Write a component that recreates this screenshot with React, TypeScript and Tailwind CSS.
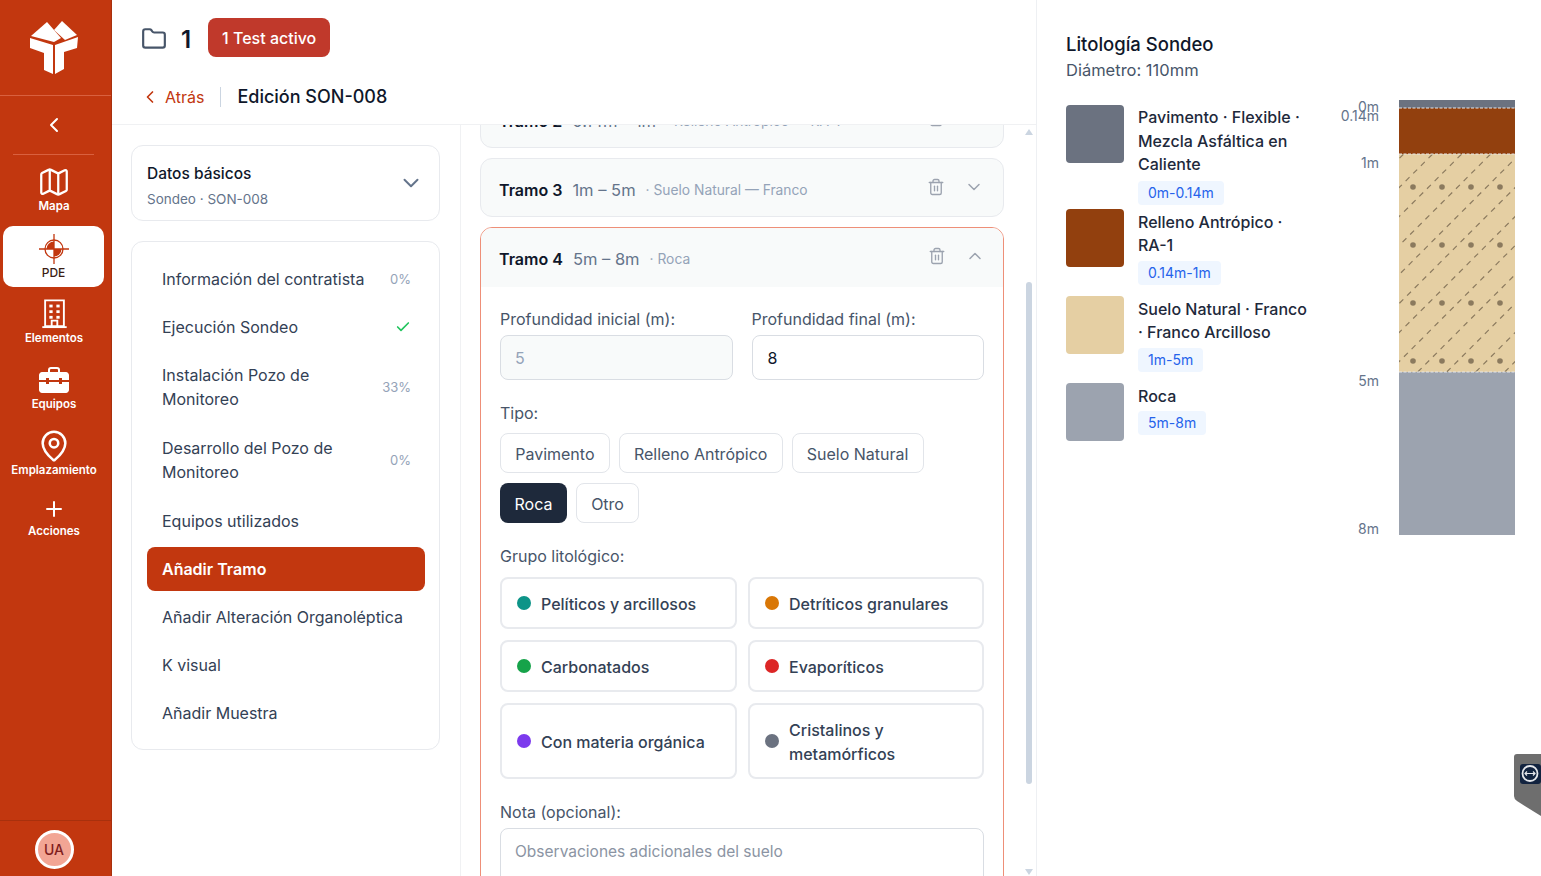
import { Check, ChevronDown, ChevronLeft, ChevronUp, Folder, Map, MapPin, Plus, Trash2 } from "lucide-react";
import type { ReactNode } from "react";

const FONT = "font-['Inter','Noto_Sans',sans-serif]";

function Logo() {
  return (
    <svg width="50" height="54" viewBox="0 0 50 54" fill="white">
      <path d="M1 15 L17 1 L31 17 L24 21 Z" />
      <path d="M24 9 L32 0 L47 14 L35 19 Z" />
      <path d="M0 17 L23 24 L23 53 L14 49 L14 32 L0 27 Z" />
      <path d="M48 16 L25 24 L25 53 L34 48 L34 31 L47 27 Z" />
    </svg>
  );
}

function PdeIcon() {
  return (
    <svg width="32" height="32" viewBox="0 0 32 32">
      <circle cx="16" cy="16" r="9" fill="none" stroke="#c2370f" strokeWidth="1.3" />
      <path d="M16 16 V8.500 A7.500 7.500 0 0 0 8.500 16 Z" fill="#c2370f" />
      <path d="M16 16 V23.500 A7.500 7.500 0 0 0 23.500 16 Z" fill="#c2370f" />
      <path d="M16 1 V31 M1 16 H31" stroke="#c2370f" strokeWidth="1.3" />
    </svg>
  );
}

function BuildingIcon() {
  return (
    <svg width="25" height="30" viewBox="0 0 26 32" fill="none" stroke="white" strokeWidth="2">
      <path d="M3 1.500 H23 V29 H3 Z" />
      <path d="M0 30 H26" />
      <path d="M10 29 V23 H16 V29" />
      <g fill="white" stroke="none">
        <rect x="7.500" y="6" width="3.500" height="3" />
        <rect x="15" y="6" width="3.500" height="3" />
        <rect x="7.500" y="12" width="3.500" height="3" />
        <rect x="15" y="12" width="3.500" height="3" />
        <rect x="7.500" y="18" width="3.500" height="3" />
        <rect x="15" y="18" width="3.500" height="3" />
      </g>
    </svg>
  );
}

function ToolboxIcon() {
  return (
    <svg width="30" height="26" viewBox="0 0 30 26" fill="white">
      <path d="M10 5 V3 C10 1.500 11 1 12 1 H18 C19 1 20 1.500 20 3 V5" fill="none" stroke="white" strokeWidth="2" />
      <path d="M3 5 H27 C28.500 5 30 6.500 30 8 V13 H23 V11 H20 V13 H10 V11 H7 V13 H0 V8 C0 6.500 1.500 5 3 5 Z" />
      <path d="M0 15 H7 V17 H10 V15 H20 V17 H23 V15 H30 V23 C30 24.500 28.500 26 27 26 H3 C1.500 26 0 24.500 0 23 Z" />
    </svg>
  );
}

function NavItem({ icon, label }: { icon: ReactNode; label: string }) {
  return (
    <div className="flex h-[66px] flex-col items-center justify-center pr-[3px] text-white">
      <div className="flex h-[34px] items-center justify-center">{icon}</div>
      <span className="text-[11.5px] font-semibold leading-[14px]">{label}</span>
    </div>
  );
}

function Sidebar() {
  return (
    <aside className="flex h-full w-[112px] shrink-0 flex-col border-r border-[#a8300d] bg-[#c2370f]">
      <div className="flex h-[96px] items-center justify-center border-b border-[#d9603f] pr-px">
        <Logo />
      </div>
      <div className="ml-[13px] flex h-[59px] w-[81px] items-center justify-center border-b border-[#d9603f]">
        <ChevronLeft className="h-6 w-6 text-white" strokeWidth={2} />
      </div>
      <div className="flex flex-1 flex-col pt-px">
        <NavItem icon={<Map className="h-[34px] w-[34px]" strokeWidth={1.6} />} label="Mapa" />
        <div className="ml-[3px] mb-px mt-[4px] flex h-[61px] w-[101px] flex-col items-center justify-center rounded-[10px] bg-white text-[#3b1d14]">
          <PdeIcon />
          <span className="text-xs font-medium leading-4">PDE</span>
        </div>
        <NavItem icon={<BuildingIcon />} label="Elementos" />
        <NavItem icon={<ToolboxIcon />} label="Equipos" />
        <NavItem icon={<MapPin className="h-[34px] w-[34px]" strokeWidth={1.8} />} label="Emplazamiento" />
        <div className="-mt-[5px]">
          <NavItem icon={<Plus className="h-6 w-6 translate-y-[2px]" strokeWidth={2} />} label="Acciones" />
        </div>
      </div>
      <div className="flex h-[56px] items-center justify-center border-t border-[#a8300d] pr-[3px] pt-[2px]">
        <div className="flex h-[39px] w-[39px] items-center justify-center rounded-full border-[3px] border-white bg-[#f2a594] text-sm font-medium text-[#7f1d1d]">
          UA
        </div>
      </div>
    </aside>
  );
}

function Header() {
  return (
    <header className="h-[125px] shrink-0 border-b border-[#f0f1f3] bg-white">
      <div className="flex h-[75px] items-center pl-[29px]">
        <Folder className="h-[26px] w-[26px] translate-y-px text-[#475569]" strokeWidth={2} />
        <span className="ml-[14px] translate-y-[1.5px] text-2xl font-semibold text-[#0f172a]">1</span>
        <span className="ml-[17px] flex h-[39px] w-[122px] items-center justify-center rounded-lg bg-[#c0392b] text-base font-medium text-white">
          1 Test activo
        </span>
      </div>
      <div className="flex h-[44px] items-center pl-[28px]">
        <ChevronLeft className="h-5 w-5 text-[#c2370f]" strokeWidth={2} />
        <span className="ml-[5px] text-base text-[#c2370f]">Atrás</span>
        <span className="ml-[16px] h-[20px] w-px bg-[#cbd5e1]" />
        <span className="ml-[16px] text-lg font-medium text-[#0f172a]">Edición SON-008</span>
      </div>
    </header>
  );
}

const steps: { label: string; pct?: string; done?: boolean; active?: boolean; tall?: boolean }[] = [
  { label: "Información del contratista", pct: "0%" },
  { label: "Ejecución Sondeo", done: true },
  { label: "Instalación Pozo de Monitoreo", pct: "33%", tall: true },
  { label: "Desarrollo del Pozo de Monitoreo", pct: "0%", tall: true },
  { label: "Equipos utilizados" },
  { label: "Añadir Tramo", active: true },
  { label: "Añadir Alteración Organoléptica" },
  { label: "K visual" },
  { label: "Añadir Muestra" },
];

function StepsPanel() {
  return (
    <div className="flex h-full w-[349px] shrink-0 flex-col border-r border-[#f0f1f3] pl-[19px] pt-[20px]">
      <div className="flex h-[76px] w-[309px] items-center justify-between rounded-xl border border-[#e8eaee] pl-[15px] pr-[15px] pt-[5px]">
        <div>
          <div className="text-[15.5px] font-medium leading-[24px] text-[#0f172a]">Datos básicos</div>
          <div className="mt-[3px] text-[13.5px] leading-[20px] text-[#64748b]">Sondeo · SON-008</div>
        </div>
        <ChevronDown className="mb-[5px] h-[26px] w-[26px] text-[#64748b]" strokeWidth={1.8} />
      </div>
      <div className="mt-[20px] flex w-[309px] flex-col rounded-xl border border-[#e8eaee] pb-[12px] pl-[15px] pr-[14px] pt-[13px]">
        {steps.map((s) => (
          <div
            key={s.label}
            className={
              s.active
                ? "my-[2px] flex h-[44px] items-center rounded-lg bg-[#c2370f] px-[15px] text-base font-semibold text-white"
                : `flex ${s.tall ? "h-[73px] pb-[2px]" : "h-[48px]"} items-center justify-between pl-[15px] pr-[14px] text-base leading-[24px] text-[#334155]`
            }
          >
            <span className={s.tall ? "w-[190px]" : ""}>{s.label}</span>
            {s.pct && <span className="text-[13px] text-[#94a3b8]">{s.pct}</span>}
            {s.done && <Check className="h-4 w-4 text-[#22c55e]" strokeWidth={2.5} />}
          </div>
        ))}
      </div>
    </div>
  );
}

function TramoHeader({ name, range, kind, open }: { name: string; range: string; kind: string; open?: boolean }) {
  return (
    <div className={open ? "flex h-[59px] items-center bg-[#f8fafa] pl-[18px] pr-[18px] pt-[2px]" : "flex h-[57px] items-center pl-[18px] pr-[19px] pt-[4px]"}>
      <span className="text-base font-semibold text-[#0f172a]">{name}</span>
      <span className="ml-[10px] translate-y-px text-[16.5px] text-[#64748b]">{range}</span>
      <span className="ml-[10px] translate-y-px text-[13.8px] text-[#94a3b8]">· {kind}</span>
      <Trash2 className="ml-auto h-[18px] w-[18px] -translate-y-[3px] text-[#9ca3af]" strokeWidth={1.8} />
      <span className="ml-[19px] -translate-y-[3px]">
        {open ? (
          <ChevronUp className="h-5 w-5 text-[#9ca3af]" strokeWidth={1.8} />
        ) : (
          <ChevronDown className="h-5 w-5 text-[#9ca3af]" strokeWidth={1.8} />
        )}
      </span>
    </div>
  );
}

function TipoChip({ label, selected }: { label: string; selected?: boolean }) {
  return (
    <span
      className={
        selected
          ? "flex h-[40px] items-center rounded-lg bg-[#1e293b] px-[14.5px] pt-px text-base text-white"
          : "flex h-[40px] items-center rounded-lg border border-[#e2e5ea] px-[14.2px] pt-px text-base text-[#475569]"
      }
    >
      {label}
    </span>
  );
}

function GroupOption({ color, label, className }: { color: string; label: string; className: string }) {
  return (
    <div className={`flex items-center gap-[10px] rounded-lg border-2 border-[#e8eaee] pl-[15px] pr-[14px] ${className}`}>
      <span className={`h-[14px] w-[14px] shrink-0 rounded-full ${color}`} />
      <span className="translate-y-px text-base font-medium leading-[24px] text-[#334155]">{label}</span>
    </div>
  );
}

function TramoForm() {
  return (
    <div className="px-[19px] pt-[19px]">
      <div className="grid grid-cols-2 gap-[19px]">
        <label className="block">
          <div className="text-base leading-[26px] text-[#475569]">Profundidad inicial (m):</div>
          <div className="mt-[3px] flex h-[45px] items-center rounded-lg border border-[#d9dde3] bg-[#f8fafa] px-[14px] text-base text-[#94a3b8]">5</div>
        </label>
        <label className="block">
          <div className="text-base leading-[26px] text-[#475569]">Profundidad final (m):</div>
          <div className="mt-[3px] flex h-[45px] items-center rounded-lg border border-[#d9dde3] px-[15px] text-base text-[#0f172a]">8</div>
        </label>
      </div>
      <div className="mt-[20px] text-base leading-[26px] text-[#475569]">Tipo:</div>
      <div className="mt-[7px] flex flex-wrap gap-x-[9px] gap-y-[10px]">
        <TipoChip label="Pavimento" />
        <TipoChip label="Relleno Antrópico" />
        <TipoChip label="Suelo Natural" />
        <TipoChip label="Roca" selected />
        <TipoChip label="Otro" />
      </div>
      <div className="mt-[20px] text-base leading-[26px] text-[#475569]">Grupo litológico:</div>
      <div className="mt-[8px] grid grid-cols-[237px_236px] gap-x-[11px] gap-y-[11px]">
        <GroupOption color="bg-[#0d9488]" label="Pelíticos y arcillosos" className="h-[52px]" />
        <GroupOption color="bg-[#d97706]" label="Detríticos granulares" className="h-[52px]" />
        <GroupOption color="bg-[#16a34a]" label="Carbonatados" className="h-[52px]" />
        <GroupOption color="bg-[#dc2626]" label="Evaporíticos" className="h-[52px]" />
        <GroupOption color="bg-[#7c3aed]" label="Con materia orgánica" className="h-[76px]" />
        <GroupOption color="bg-[#6b7280]" label="Cristalinos y metamórficos" className="h-[76px]" />
      </div>
      <div className="mt-[20px] text-base leading-[26px] text-[#475569]">Nota (opcional):</div>
      <div className="mt-[3px] h-[90px] rounded-lg border border-[#d9dde3] px-[14px] py-[11px] text-[15.5px] text-[#8b94a3]">
        Observaciones adicionales del suelo
      </div>
    </div>
  );
}

function TramosColumn() {
  return (
    <div className="relative h-full flex-1 overflow-hidden">
      <div className="-mt-[36px] flex flex-col gap-[10px] pl-[19px] pr-[32px]">
        <div className="rounded-xl border border-[#e8eaee] bg-[#f8fafa]">
          <TramoHeader name="Tramo 2" range="0.14m – 1m" kind="Relleno Antrópico — RA-1" />
        </div>
        <div className="rounded-xl border border-[#e8eaee] bg-[#f8fafa]">
          <TramoHeader name="Tramo 3" range="1m – 5m" kind="Suelo Natural — Franco" />
        </div>
        <div className="overflow-hidden rounded-xl border border-[#ee8f78]">
          <TramoHeader name="Tramo 4" range="5m – 8m" kind="Roca" open />
          <TramoForm />
        </div>
      </div>
      {/* scrollbar */}
      <div className="absolute inset-y-0 right-0 w-[12px]">
        <div className="absolute left-[1px] top-[4px] h-0 w-0 border-x-[4px] border-b-[6px] border-x-transparent border-b-[#cbd5e1]" />
        <div className="absolute left-[2px] top-[157px] h-[502px] w-[6px] rounded-full bg-[#cbd5e1]" />
        <div className="absolute bottom-[1px] left-[1px] h-0 w-0 border-x-[4px] border-t-[6px] border-x-transparent border-t-[#cbd5e1]" />
      </div>
    </div>
  );
}

const legend = [
  { color: "bg-[#6b7280]", label: "Pavimento · Flexible · Mezcla Asfáltica en Caliente", range: "0m-0.14m", tight: true },
  { color: "bg-[#92400e]", label: "Relleno Antrópico · RA-1", range: "0.14m-1m" },
  { color: "bg-[#e5cfa3]", label: "Suelo Natural · Franco · Franco Arcilloso", range: "1m-5m" },
  { color: "bg-[#9ca3af]", label: "Roca", range: "5m-8m" },
];

function Column() {
  const dots: number[][] = [];
  for (const y of [87, 145, 203, 261]) {
    for (const x of [14, 43, 72, 101]) dots.push([x, y]);
  }
  const lines: number[] = [];
  for (let k = -8; k <= 4; k++) lines.push(18.7 + k * 29);
  return (
    <svg width="176" height="450" viewBox="-60 -8 176 450" className="shrink-0 font-['Inter',sans-serif]">
      <rect x="0" y="0" width="116" height="8" fill="#6b7280" />
      <rect x="0" y="8" width="116" height="46" fill="#92400e" />
      <rect x="0" y="54" width="116" height="218" fill="#e5cfa3" />
      <rect x="0" y="272" width="116" height="163" fill="#9ca3af" />
      <clipPath id="suelo">
        <rect x="0" y="54" width="116" height="218" />
      </clipPath>
      <g clipPath="url(#suelo)">
        {lines.map((x) => (
          <line key={x} x1={x} y1={272} x2={x + 218} y2={54} stroke="#8b7a5e" strokeWidth="1.2" strokeDasharray="5.500 5.300" />
        ))}
        {dots.map(([x, y]) => (
          <circle key={`${x}-${y}`} cx={x} cy={y} r="2.800" fill="#8b7a5e" />
        ))}
      </g>
      <path d="M0 8 H116 M0 54 H116 M0 272 H116" stroke="#e5e7eb" strokeWidth="1" strokeDasharray="3 1.500" />
      <g fontSize="14" fill="#64748b" textAnchor="end">
        <text x="-20" y="12">0m</text>
        <text x="-20" y="21">0.14m</text>
        <text x="-20" y="68">1m</text>
        <text x="-20" y="286">5m</text>
        <text x="-20" y="434">8m</text>
      </g>
    </svg>
  );
}

function LithologyPanel() {
  return (
    <div className="flex h-full w-[505px] shrink-0 flex-col border-l border-[#eef0f3] pl-[29px] pt-[30px]">
      <div className="text-[18.5px] font-medium leading-[28px] text-[#0f172a]">Litología Sondeo</div>
      <div className="text-[16.5px] leading-[25px] text-[#475569]">Diámetro: 110mm</div>
      <div className="flex">
        <div className="w-[273px] shrink-0 pt-[22px]">
          <div className="flex flex-col gap-[11px]">
            {legend.map((l) => (
              <div key={l.label} className={l.tight ? "-mb-[7px] flex gap-[14px]" : "flex gap-[14px]"}>
                <div className={`h-[58px] w-[58px] shrink-0 rounded ${l.color}`} />
                <div className="w-[172px]">
                  <div className={l.tight ? "pt-px text-base font-medium leading-[23.5px] text-[#1e293b]" : "pt-[2px] text-base font-medium leading-[23.5px] text-[#1e293b]"}>{l.label}</div>
                  <span className={l.tight ? "mt-[4px] inline-block rounded bg-[#eff6ff] px-[10px] text-sm leading-[24px] text-[#2563eb]" : "mt-[3px] inline-block rounded bg-[#eff6ff] px-[10px] text-sm leading-[24px] text-[#2563eb]"}>{l.range}</span>
                </div>
              </div>
            ))}
          </div>
        </div>
        <div className="mt-[9px]">
          <Column />
        </div>
      </div>
    </div>
  );
}

function TeamViewerTab() {
  return (
    <svg className="absolute right-0 top-[754px]" width="27" height="63" viewBox="0 0 27 63">
      <path d="M27 0 H3 Q0 0 0 3 V42 Q0 45 3 47 L27 62 Z" fill="#6e6e6e" />
      <rect x="6" y="10" width="21" height="20" rx="3" fill="#12233f" />
      <circle cx="16" cy="19.500" r="7.500" fill="none" stroke="#e5e7eb" strokeWidth="1.800" />
      <path d="M11 19.500 H21 M13 17.500 L11 19.500 L13 21.500 M19 17.500 L21 19.500 L19 21.500" stroke="#e5e7eb" strokeWidth="1.200" fill="none" />
    </svg>
  );
}

export default function App() {
  return (
    <div className={`relative flex h-[876px] w-[1541px] overflow-hidden bg-white ${FONT}`}>
      <Sidebar />
      <div className="flex h-full w-[924px] shrink-0 flex-col">
        <Header />
        <div className="flex min-h-0 flex-1">
          <StepsPanel />
          <TramosColumn />
        </div>
      </div>
      <LithologyPanel />
      <TeamViewerTab />
    </div>
  );
}
